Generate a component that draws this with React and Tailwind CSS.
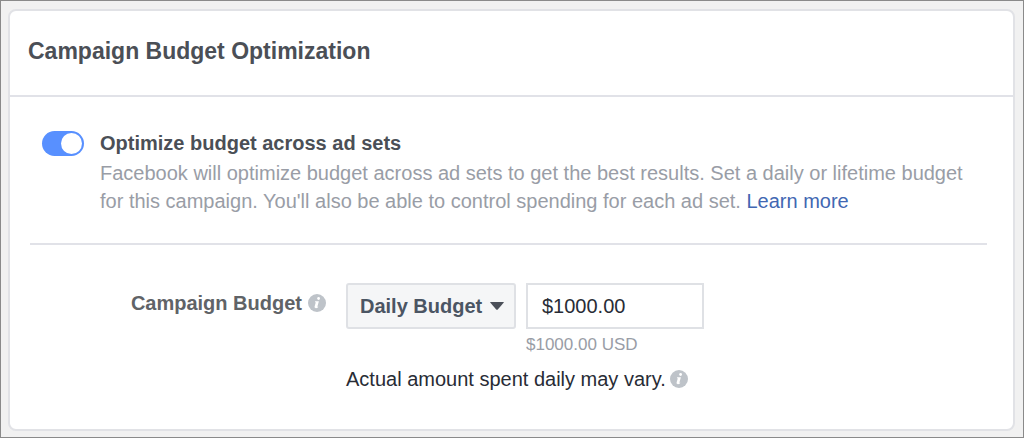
import React from "react";

function InfoIcon({ label }) {
  return (
    <svg role="img" aria-label={label} viewBox="0 0 18 18" className="size-[18px] shrink-0">
      <circle cx="9" cy="9" r="9" fill="#bec3c9" />
      <circle cx="10.6" cy="4.5" r="1.4" fill="#fff" />
      <path d="M7.2 7.2h3.7l-1.5 5.2q-.2.7.9.2l-.2.7q-1.3 1-2.6.8-1.300-.2-.9-1.600l1.200-4.300H6.900z" fill="#fff" />
    </svg>
  );
}

export default function App() {
  return (
    <div className="flex min-h-screen flex-col border border-[#8a8a8a] bg-[#f1f1f1] pt-2 pr-2 pb-1.5 pl-[7px] font-['Liberation_Sans',Arial,sans-serif] text-xl">
      <main className="flex-1 rounded-lg border-2 border-[#e1e2e6] bg-white pb-6">
        <header className="border-b-2 border-[#e1e2e8] px-[18px] pt-6 pb-7">
          <h1 className="text-[23px] leading-8 font-bold text-[#4b4f56]">Campaign Budget Optimization</h1>
        </header>
        <section className="mr-[26px] ml-5 flex gap-4 border-b-2 border-[#e1e2e8] pt-[30px] pb-7 pl-3">
          <div className="relative mt-1 h-[25px] w-[42px] shrink-0">
            <input id="optimize" type="checkbox" role="switch" defaultChecked className="peer block h-[25px] w-[42px] appearance-none rounded-full bg-[#bec3c9] checked:bg-[#5890ff]" />
            <span className="pointer-events-none absolute top-0.5 left-0.5 size-[21px] rounded-full bg-white peer-checked:left-[19px]" />
          </div>
          <div>
            <h2 className="leading-8 font-bold text-[#4b4f56]">
              <label htmlFor="optimize">Optimize budget across ad sets</label>
            </h2>
            <p className="leading-7 text-[#999da6]">
              Facebook will optimize budget across ad sets to get the best results. Set a daily or lifetime budget for this campaign. You'll also be able to control spending for each ad set.{" "}
              <a href="#learn" className="text-[#4267b2]">Learn more</a>
            </p>
          </div>
        </section>
        <section className="flex pt-[38px]">
          <div className="flex w-[316px] shrink-0 items-center justify-end gap-1.5 self-start pt-1">
            <label htmlFor="budget" className="leading-8 font-bold text-[#606367]">Campaign Budget</label>
            <InfoIcon label="About campaign budget" />
          </div>
          <div className="ml-5">
            <div className="flex gap-2.5">
              <div className="relative">
                <select aria-label="Budget type" className="h-[46px] w-[170px] appearance-none rounded-[3px] border-2 border-[#dfe1e5] bg-[#f5f6f7] pl-3 font-bold text-[#4b5563]">
                  <option>Daily Budget</option>
                  <option>Lifetime Budget</option>
                </select>
                <svg viewBox="0 0 14 8" className="pointer-events-none absolute top-[19px] right-3 h-2 w-3.5" fill="#4b5059"><path d="M.7 0h12.600q1 0 .3.800L7.800 7.400q-.8.800-1.600 0L.4.800Q-.3 0 .7 0z" /></svg>
              </div>
              <div>
                <input id="budget" defaultValue="$1000.00" className="block h-[46px] w-[178px] border-2 border-[#dfe1e5] bg-white px-3.5 text-[#282c35]" />
                <p className="pt-1 text-[17px] leading-6 text-[#999da6]">$1000.00 USD</p>
              </div>
            </div>
            <div className="flex items-center gap-1 pt-1.5">
              <p className="leading-8 text-[#282c35]">Actual amount spent daily may vary.</p>
              <InfoIcon label="About daily spending" />
            </div>
          </div>
        </section>
      </main>
    </div>
  );
}
